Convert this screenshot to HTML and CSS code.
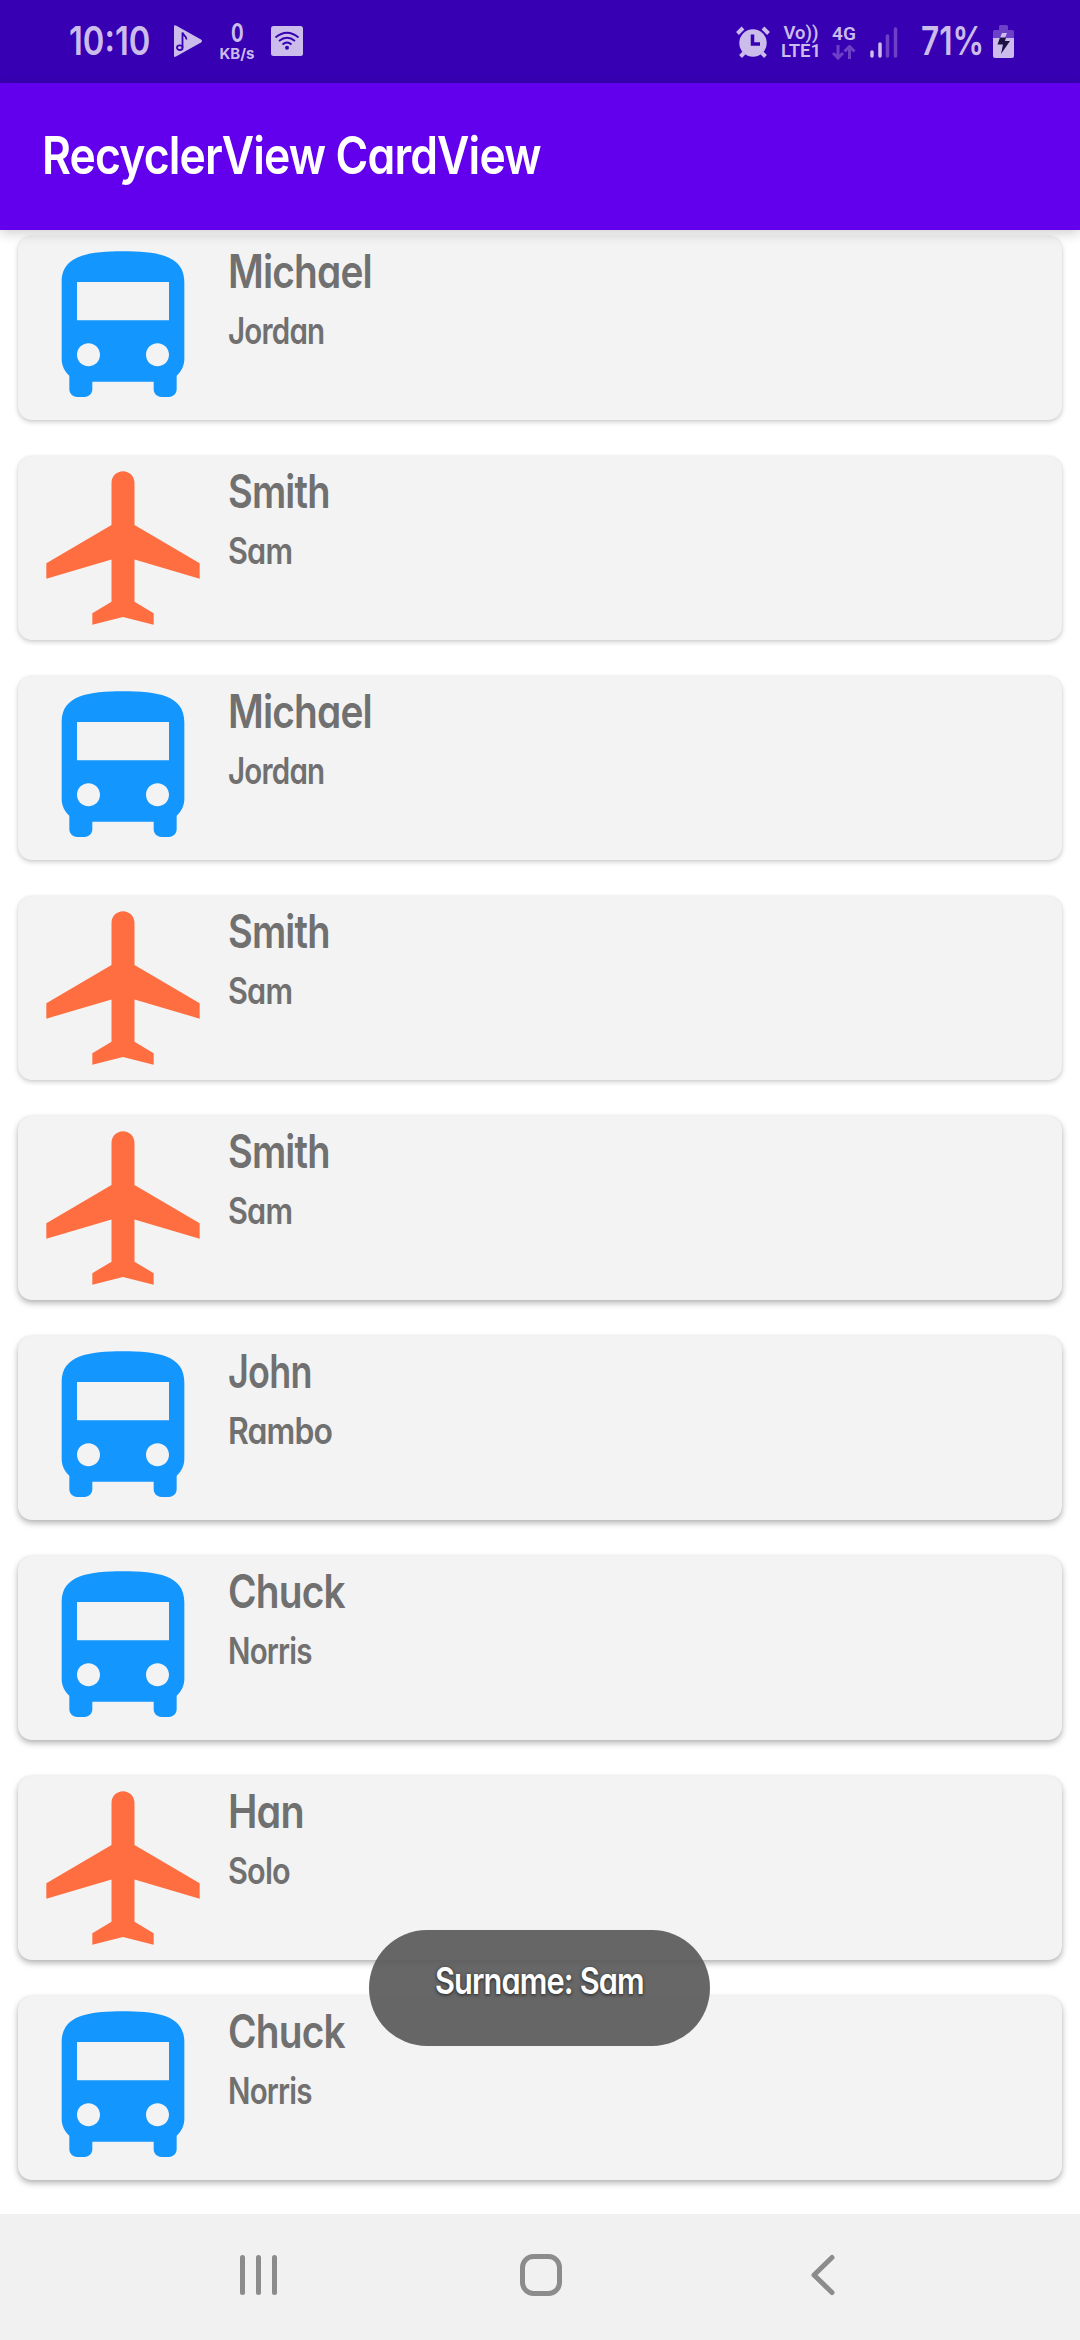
FILE: index.html
```
<!DOCTYPE html>
<html lang="en">
<head>
<meta charset="utf-8">
<title>RecyclerView CardView</title>
<link rel="stylesheet" href="styles.css">
</head>
<body>
<svg class="defs" aria-hidden="true">
  <symbol id="bus" viewBox="0 0 24 24"><path d="M4 16c0 .88.39 1.67 1 2.22V20c0 .55.45 1 1 1h1c.55 0 1-.45 1-1v-1h8v1c0 .55.45 1 1 1h1c.55 0 1-.45 1-1v-1.78c.61-.55 1-1.34 1-2.22V6c0-3.500-3.580-4-8-4s-8 .5-8 4v10zm3.500 1c-.83 0-1.500-.67-1.500-1.500S6.670 14 7.500 14s1.500.67 1.500 1.500S8.330 17 7.500 17zm9 0c-.83 0-1.500-.67-1.500-1.500s.67-1.500 1.500-1.500 1.500.67 1.500 1.500-.67 1.500-1.500 1.500zm1.500-6H6V6h12v5z"/></symbol>
  <symbol id="plane" viewBox="0 0 24 24"><path d="M22 16v-2l-8.500-5V3.500C13.500 2.670 12.830 2 12 2s-1.500.67-1.500 1.500V9L2 14v2l8.500-2.500V19L8 20.500V22l4-1 4 1v-1.500L13.500 19v-5.500L22 16z"/></symbol>
</svg>
<div class="screen">
  <header class="status">
    <span class="clock"><span>10:10</span></span>
    <svg class="play" viewBox="0 0 28 32"><path d="M0 1.500Q0-.5 2 .5L27 14.500Q29 16 27 17.500L2 31.500Q0 32.500 0 31z"/><path class="cut" d="M8.500 22.500V7.500c.5 3 4 3 4 7"/><ellipse class="cut" cx="5.800" cy="22.700" rx="2.800" ry="2.300"/></svg>
    <span class="speed"><b>0</b><span>KB/s</span></span>
    <svg class="wifi" viewBox="0 0 32 30"><rect width="32" height="30" rx="2.500"/><path class="cut" d="M4.500 11.500Q16 2 27.500 11.500M8 15Q16 8.500 24 15M11.500 18.500Q16 14.500 20.500 18.500"/><circle class="dot" cx="16" cy="21.700" r="2"/></svg>
    <span class="gap"></span>
    <svg class="alarm" viewBox="0 0 34 32"><path class="line" d="M1.500 7.500L7 2M27 2l5.500 5.500M8 27l-3.500 3.500M26 27l3.500 3.500"/><circle cx="17" cy="17" r="13.700"/><path class="cut" d="M16.500 8.500V18h7.500"/></svg>
    <span class="volte"><span>Vo))</span><span>LTE1</span></span>
    <span class="net"><span>4G</span><svg viewBox="0 0 24 15"><path d="M6 0v12M1 8l5 5 5-5M17.500 14V2M12.500 6.500l5-5 5 5"/></svg></span>
    <svg class="signal" viewBox="0 0 28 31"><path d="M2 25v4M10 17v12"/><path class="dim" d="M17.500 9v20M25.500 2v27"/></svg>
    <span class="percent"><span>71%</span></span>
    <svg class="battery" viewBox="0 0 21 33"><path class="dim" d="M6 1.500Q6 0 7.500 0h6Q15 0 15 1.500V5h4.500Q21 5 21 6.500V13H0V6.500Q0 5 1.500 5H6z"/><path d="M0 13h21v18q0 2-2 2H2q-2 0-2-2z"/><path d="M9 8h5l-2 5H7z"/><path class="bolt" d="M7 12.500h6L12 16h5L8 29l2-9.500H4.500z"/></svg>
  </header>
  <div class="appbar"><h1>RecyclerView CardView</h1></div>
  <main class="list">
    <article class="card"><svg class="bus"><use href="#bus"/></svg><div class="names"><h2 class="wide">Michael</h2><p class="tight">Jordan</p></div></article>
    <article class="card"><svg class="plane"><use href="#plane"/></svg><div class="names"><h2>Smith</h2><p>Sam</p></div></article>
    <article class="card"><svg class="bus"><use href="#bus"/></svg><div class="names"><h2 class="wide">Michael</h2><p class="tight">Jordan</p></div></article>
    <article class="card"><svg class="plane"><use href="#plane"/></svg><div class="names"><h2>Smith</h2><p>Sam</p></div></article>
    <article class="card"><svg class="plane"><use href="#plane"/></svg><div class="names"><h2>Smith</h2><p>Sam</p></div></article>
    <article class="card"><svg class="bus"><use href="#bus"/></svg><div class="names"><h2 class="tighter">John</h2><p class="wider">Rambo</p></div></article>
    <article class="card"><svg class="bus"><use href="#bus"/></svg><div class="names"><h2 class="wide">Chuck</h2><p class="tight">Norris</p></div></article>
    <article class="card"><svg class="plane"><use href="#plane"/></svg><div class="names"><h2 class="wider">Han</h2><p>Solo</p></div></article>
    <article class="card"><svg class="bus"><use href="#bus"/></svg><div class="names"><h2 class="wide">Chuck</h2><p class="tight">Norris</p></div></article>
  </main>
  <nav class="nav">
    <svg viewBox="0 0 44 44"><path d="M5.500 4.500v35M21.500 4.500v35M37.500 4.500v35"/></svg>
    <svg viewBox="0 0 44 44"><rect x="3.500" y="3.500" width="37" height="37" rx="11"/></svg>
    <svg viewBox="0 0 44 44"><path d="M32 4.500L14 22l18 17.500"/></svg>
  </nav>
  <div class="toast"><span>Surname: Sam</span></div>
</div>
</body>
</html>
```
FILE: styles.css
```
* { box-sizing: border-box; }
body { margin: 0; background: #fff; font-family: Inter, "Liberation Sans", sans-serif; font-feature-settings: "cv11"; }
h1, h2, p { margin: 0; white-space: nowrap; transform-origin: 0 50%; }
.defs { position: absolute; width: 0; height: 0; }
.screen { position: relative; width: 1080px; height: 2340px; display: flex; flex-direction: column; overflow: hidden; }

.status { height: 83px; flex: none; display: flex; align-items: flex-start; background: #3700b3; color: #cbbceb; padding: 0 66px 0 69px; }
.status svg { flex: none; fill: #cbbceb; }
.status .cut { fill: none; stroke: #3700b3; stroke-width: 1.800; }
.clock { width: 84px; margin: 20px 21px 0 0; font-size: 39px; line-height: 42px; font-weight: 600; }
.clock span, .percent span { display: block; white-space: nowrap; transform-origin: 0 50%; transform: scaleX(.84); }
.play { width: 28px; height: 32px; margin-top: 25px; }
.speed { width: 36px; margin: 21px 16px 0 17px; display: flex; flex-direction: column; align-items: center; font-size: 15px; line-height: 16px; font-weight: 700; }
.speed b { font-size: 25px; line-height: 25px; font-weight: 700; transform: scaleX(.75); }
.wifi { width: 32px; height: 30px; margin-top: 26px; }
.status .wifi .dot { fill: #3700b3; }
.gap { flex: 1; }
.alarm { width: 34px; height: 32px; margin: 26px 12px 0 0; }
.alarm .line { stroke: #cbbceb; stroke-width: 4; }
.status .alarm .cut { stroke-width: 3.500; }
.volte { width: 38px; margin: 24px 12px 0 0; display: flex; flex-direction: column; align-items: center; font-family: Roboto, sans-serif; font-size: 18.500px; line-height: 18px; font-weight: 600; }
.net { width: 24px; margin: 24px 14px 0 0; display: flex; flex-direction: column; align-items: center; font-family: Roboto, sans-serif; font-size: 19px; line-height: 20px; font-weight: 600; }
.net svg { width: 24px; height: 15px; margin-top: 1px; }
.status .net path { fill: none; stroke: #6d40c8; stroke-width: 3; }
.signal { width: 28px; height: 31px; margin-top: 27px; }
.signal path { stroke: #cbbceb; stroke-width: 3.500; stroke-linecap: round; }
.signal .dim { stroke: #6d40c8; }
.percent { width: 62px; margin: 20px 10px 0 23px; font-size: 39px; line-height: 42px; font-weight: 600; }
.percent span { transform: scaleX(.81); }
.battery { width: 21px; height: 33px; margin-top: 25px; }
.battery .dim { fill: #6d40c8; }
.battery .bolt { fill: #1c1140; }

.appbar { position: relative; z-index: 1; height: 147px; flex: none; padding: 0 42px 1px; display: flex; align-items: center; background: #6200ee; color: #fff; box-shadow: 0 3px 12px rgba(0, 0, 0, .2); }
.appbar h1 { font-size: 52px; line-height: 60px; font-weight: 600; letter-spacing: -1px; transform: scaleX(.855); }

.list { flex: 1; padding: 6px 18px 0; display: flex; flex-direction: column; gap: 36px; }
.card { height: 184px; flex: none; display: flex; gap: 13px; padding-left: 13px; border-radius: 14px; background: #f3f3f3; box-shadow: 0 2px 5px rgba(0, 0, 0, .2), 0 0 2px rgba(0, 0, 0, .07); }
.card svg { width: 184px; height: 184px; margin-top: -.33px; flex: none; }
.card:nth-child(n+5) { box-shadow: 0 3px 6px rgba(0, 0, 0, .3), 0 0 2px rgba(0, 0, 0, .07); }
.bus { fill: #1496ff; }
.plane { fill: #ff6e40; }
.names { padding-top: 5px; color: #707070; }
.names h2 { font-size: 46.500px; line-height: 60px; font-weight: 570; letter-spacing: -1px; transform: scaleX(.818); }
.names p { font-size: 36.500px; line-height: 60px; font-weight: 560; letter-spacing: -1px; transform: scaleX(.84); }
.names h2.wide { transform: scaleX(.835); }
.names h2.wider { transform: scaleX(.85); }
.names h2.tighter { transform: scaleX(.773); }
.names p.wider { transform: scaleX(.875); }
.names p.tight { transform: scaleX(.81); }

.nav { position: relative; height: 126px; flex: none; display: flex; justify-content: space-between; padding: 39px 236px 0 237px; background: #f1f1f1; }
.nav svg { width: 44px; height: 44px; fill: none; stroke: #8c8c8c; stroke-width: 5; stroke-linecap: round; stroke-linejoin: round; }

.toast { position: absolute; left: 369px; top: 1930px; width: 341px; height: 116px; border-radius: 58px; background: rgba(88, 88, 88, .91); color: #fff; display: flex; justify-content: center; }
.toast span { white-space: nowrap; font-size: 36.500px; line-height: 103px; font-weight: 600; letter-spacing: -1px; text-shadow: 0 1px 4px rgba(0, 0, 0, .7); transform: scaleX(.84); }
```
